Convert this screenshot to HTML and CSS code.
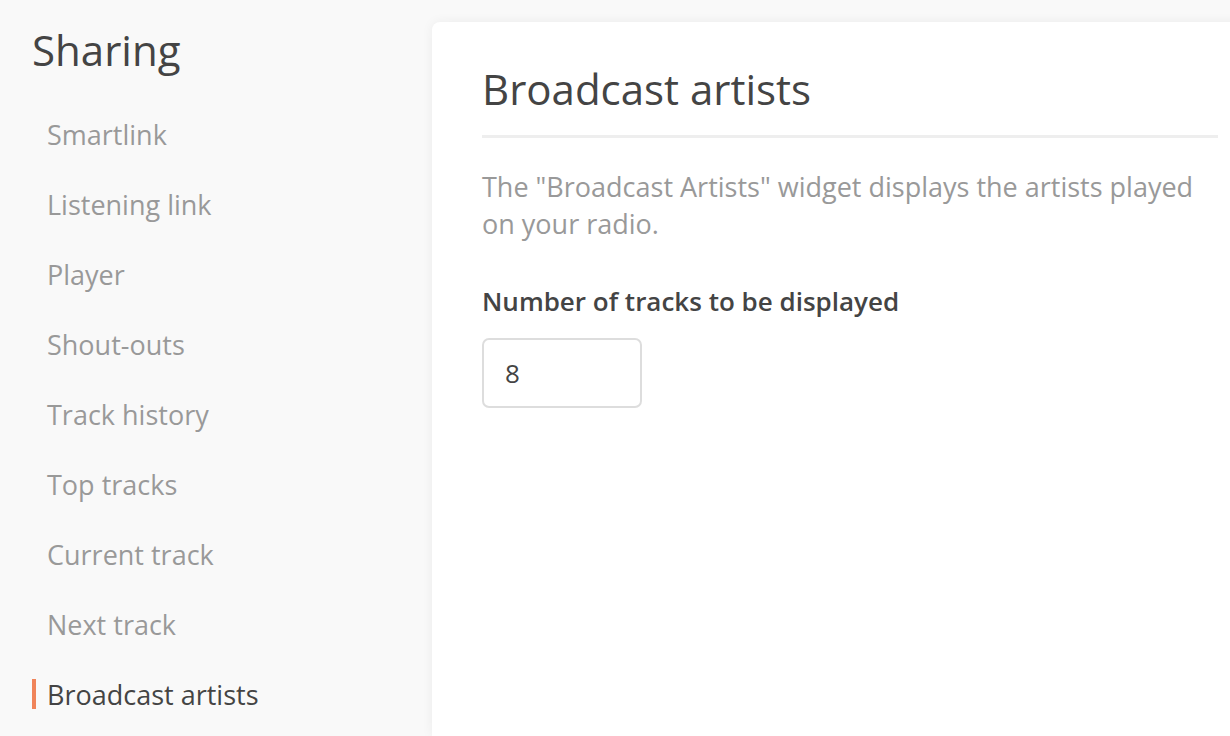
FILE: index.html
```html
<!DOCTYPE html>
<html>
<head>
    <link rel="stylesheet" href="styles.css">
</head>
<body>
    <div class="layout">
        <aside class="sidebar">
            <h2 class="sidebar-title">Sharing</h2>
            <nav class="nav">
                <a class="nav-item">Smartlink</a>
                <a class="nav-item">Listening link</a>
                <a class="nav-item">Player</a>
                <a class="nav-item">Shout-outs</a>
                <a class="nav-item">Track history</a>
                <a class="nav-item">Top tracks</a>
                <a class="nav-item">Current track</a>
                <a class="nav-item">Next track</a>
                <a class="nav-item active">Broadcast artists</a>
            </nav>
        </aside>

        <main class="main">
            <div class="card">
                <h1 class="card-title">Broadcast artists</h1>
                <p class="card-desc">The "Broadcast Artists" widget displays the artists played on your radio.</p>

                <label class="field-label" for="trackCount">Number of tracks to be displayed</label>
                <input class="field-input" id="trackCount" type="text" value="8">
            </div>
        </main>
    </div>
</body>
</html>
```

FILE: styles.css
```css
:root {
    --page-bg: #f9f9f9;
    --text-dark: #444444;
    --text-muted: #999999;
    --accent-color: #f0845a;
}

body {
    margin: 0;
    padding: 0;
    font-family: "Open Sans", "Noto Sans", sans-serif;
    background: var(--page-bg);
    color: var(--text-dark);
    overflow: hidden;
    height: 736px;
}

.layout {
    display: flex;
    height: 100%;
}

.sidebar {
    width: 432px;
    flex-shrink: 0;
    padding: 22px 0 0 32px;
    box-sizing: border-box;
}

.sidebar-title {
    margin: 0 0 21px 0;
    font-size: 42px;
    font-weight: 400;
    line-height: 56px;
    color: var(--text-dark);
}

.nav {
    display: flex;
    flex-direction: column;
}

.nav-item {
    display: flex;
    align-items: center;
    height: 70px;
    padding-left: 15px;
    font-size: 27px;
    color: var(--text-muted);
    position: relative;
}

.nav-item.active {
    color: var(--text-dark);
}

.nav-item.active::before {
    content: "";
    position: absolute;
    left: 0;
    top: 20px;
    width: 4px;
    height: 30px;
    background: var(--accent-color);
}

.main {
    flex: 1;
    padding-top: 22px;
}

.card {
    width: 836px;
    height: 714px;
    box-sizing: border-box;
    padding: 39px 50px;
    background: #ffffff;
    border-radius: 8px 0 0 0;
    box-shadow: 0 0 12px rgba(0, 0, 0, 0.06);
}

.card-title {
    margin: 0;
    padding-bottom: 18px;
    border-bottom: 3px solid #eeeeee;
    font-size: 42px;
    font-weight: 400;
    line-height: 56px;
    color: var(--text-dark);
}

.card-desc {
    margin: 30px 0 41px;
    font-size: 27px;
    line-height: 37px;
    color: var(--text-muted);
}

.field-label {
    display: block;
    margin-bottom: 19px;
    font-size: 26px;
    line-height: 36px;
    font-weight: 600;
    color: var(--text-dark);
}

.field-input {
    display: block;
    width: 160px;
    height: 70px;
    box-sizing: border-box;
    padding: 0 21px;
    border: 2px solid #dddddd;
    border-radius: 7px;
    font-family: inherit;
    font-size: 26px;
    color: var(--text-dark);
}
```
